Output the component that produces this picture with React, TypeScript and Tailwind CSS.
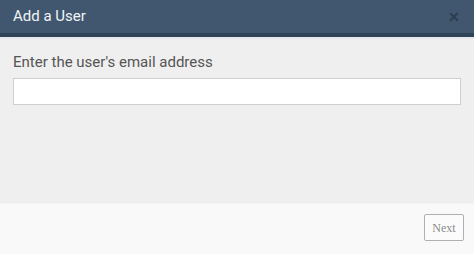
export default function App() {
  return (
    <div className="w-[474px] h-[254px] flex flex-col font-['Roboto',sans-serif] bg-[#f9f9f9]">
      <div className="h-[33px] bg-[#41576f] flex items-center justify-between pl-[13px] pr-[14px] shrink-0">
        <span className="text-[15px] text-[#f1f4f7] leading-none">Add a User</span>
        <span className="text-[#2c3d50] text-[14px] font-bold leading-none">✕</span>
      </div>
      <div className="h-[4px] bg-[#2f4359] shrink-0" />
      <div className="h-[2px] bg-[#e4e8ec] shrink-0" />
      <div className="h-[164px] bg-[#efefef] px-[13px] pt-[14px] shrink-0">
        <label className="block text-[15px] text-[#555555] leading-[18px]">Enter the user's email address</label>
        <input
          type="text"
          className="block w-full h-[27px] mt-[7px] bg-white border border-[#cfcfcf] outline-none"
        />
      </div>
      <div className="h-px bg-[#f3f3f3]" />
      <div className="flex-1 flex justify-end items-start pt-[10px] pr-[10px]">
        <button className="w-[40px] h-[27px] border border-[#b0b0b0] rounded-[2px] bg-[#fbfbfb] text-[12px] text-[#8c8c8c] font-['Liberation_Serif',serif]">
          Next
        </button>
      </div>
    </div>
  );
}
